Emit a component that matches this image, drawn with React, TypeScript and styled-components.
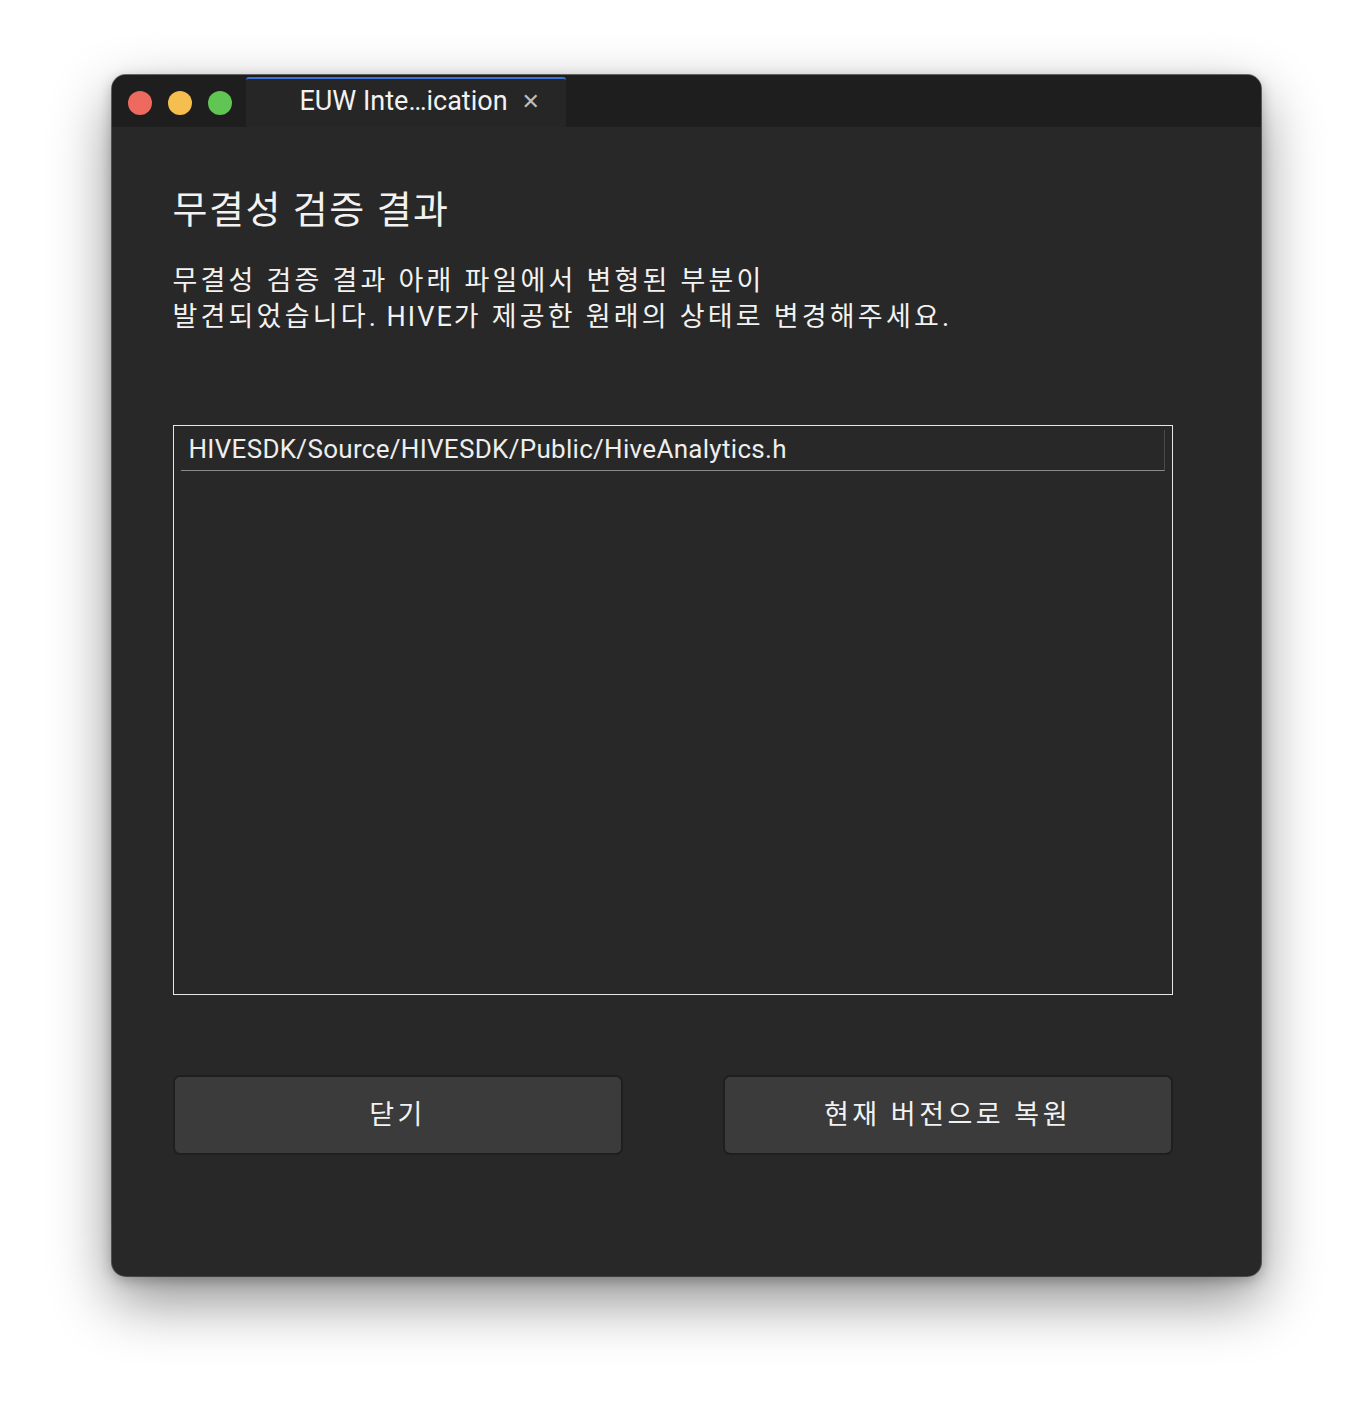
import React from "react";
import styled, { createGlobalStyle } from "styled-components";

const Global = createGlobalStyle`
  html, body { margin: 0; padding: 0; background: #ffffff; }
  body { font-family: Roboto, "Noto Sans CJK KR", sans-serif; }
`;

const Page = styled.div`
  width: 1372px;
  height: 1424px;
  display: flex;
  justify-content: center;
  padding-top: 75px;
  box-sizing: border-box;
`;

const Window = styled.div`
  width: 1149px;
  height: 1201px;
  border-radius: 14px;
  background: #282828;
  overflow: hidden;
  display: flex;
  flex-direction: column;
  box-shadow: 0 0 0 1px rgba(0,0,0,0.55), 0 24px 60px rgba(0,0,0,0.45), 0 4px 14px rgba(0,0,0,0.25);
`;

const TitleBar = styled.div`
  height: 52px;
  background: #1e1e1e;
  display: flex;
  align-items: flex-end;
  flex-shrink: 0;
`;

const Lights = styled.div`
  display: flex;
  gap: 16px;
  padding: 4px 0 0 16px;
  height: 52px;
  box-sizing: border-box;
  align-items: center;
`;

const Light = styled.span<{ $c: string }>`
  width: 24px;
  height: 24px;
  border-radius: 50%;
  background: ${(p) => p.$c};
  display: block;
`;

const Tab = styled.div`
  margin-left: 14px;
  width: 320px;
  height: 50px;
  background: #262626;
  border-top: 2px solid #3a72d8;
  border-top-left-radius: 3px;
  border-top-right-radius: 3px;
  display: flex;
  align-items: center;
  gap: 14px;
  box-sizing: border-box;
  padding: 0 0 4px 54px;
`;

const TabTitle = styled.span`
  color: #f2f2f2;
  font-family: Roboto, sans-serif;
  font-size: 27px;
`;

const TabClose = styled.span`
  color: #bdbdbd;
  font-family: "DejaVu Sans", sans-serif;
  font-size: 22px;
  font-weight: bold;
`;

const Content = styled.div`
  flex: 1;
  padding: 61px 88px 0 61px;
  display: flex;
  flex-direction: column;
`;

const Heading = styled.h1`
  margin: 0;
  color: #f2f2f2;
  font-family: Roboto, "Noto Sans CJK KR", sans-serif;
  font-weight: 400;
  font-size: 38px;
  line-height: 44px;
  letter-spacing: 1.5px;
`;

const Desc = styled.p`
  margin: 31px 0 0;
  color: #f2f2f2;
  font-family: Roboto, "Noto Sans CJK KR", sans-serif;
  font-weight: 400;
  font-size: 27px;
  line-height: 36px;
  letter-spacing: 3.2px;
`;

const Latin = styled.span`
  letter-spacing: 2px;
`;

const ListBox = styled.div`
  margin-top: 90px;
  width: 1000px;
  height: 570px;
  border: 1px solid #e6e6e6;
  box-sizing: border-box;
  padding: 4px 7px 0 7px;
`;

const ListItem = styled.div`
  height: 41px;
  border-bottom: 1px solid #8a8a8a;
  border-right: 1px solid #4a4a4a;
  box-sizing: border-box;
  padding: 0 0 3px 8px;
  display: flex;
  align-items: center;
  color: #eeeeee;
  font-family: Roboto, sans-serif;
  font-size: 26px;
  letter-spacing: 0.3px;
`;

const Buttons = styled.div`
  margin-top: 80px;
  width: 1000px;
  display: flex;
  justify-content: space-between;
`;

const Button = styled.button`
  width: 450px;
  height: 80px;
  padding: 0 0 5px;
  background: #3b3b3b;
  border: 2px solid #1f1f1f;
  border-radius: 7px;
  color: #f2f2f2;
  font-family: Roboto, "Noto Sans CJK KR", sans-serif;
  font-size: 27px;
  letter-spacing: 3.5px;
  cursor: pointer;
`;

export default function App() {
  return (
    <>
      <Global />
      <Page>
        <Window>
          <TitleBar>
            <Lights>
              <Light $c="#ee695e" />
              <Light $c="#f5bf4f" />
              <Light $c="#61c554" />
            </Lights>
            <Tab>
              <TabTitle>EUW Inte…ication</TabTitle>
              <TabClose>✕</TabClose>
            </Tab>
          </TitleBar>
          <Content>
            <Heading>무결성 검증 결과</Heading>
            <Desc>
              무결성 검증 결과 아래 파일에서 변형된 부분이
              <br />
              발견되었습니다<Latin>. HIVE</Latin>가 제공한 원래의 상태로 변경해주세요.
            </Desc>
            <ListBox>
              <ListItem>HIVESDK/Source/HIVESDK/Public/HiveAnalytics.h</ListItem>
            </ListBox>
            <Buttons>
              <Button>닫기</Button>
              <Button>현재 버전으로 복원</Button>
            </Buttons>
          </Content>
        </Window>
      </Page>
    </>
  );
}
